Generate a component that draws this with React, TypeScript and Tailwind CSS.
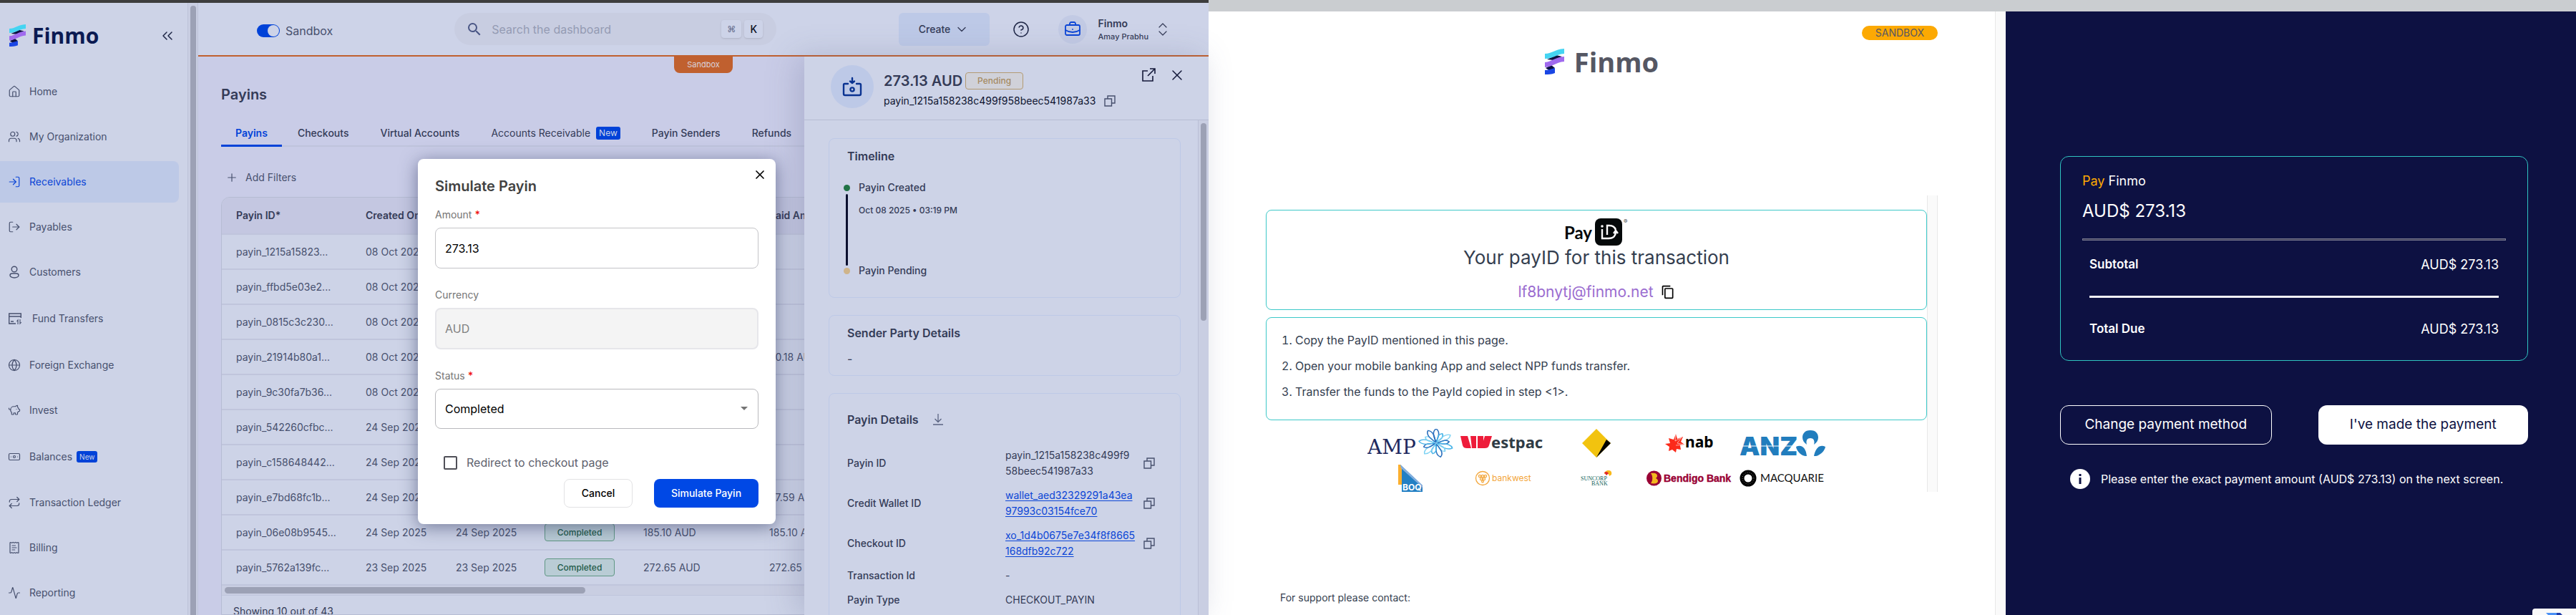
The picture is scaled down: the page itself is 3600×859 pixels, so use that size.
import React from "react";
import {
  Activity,
  Banknote,
  BriefcaseBusiness,
  ChevronDown,
  ChevronsLeft,
  ChevronsUpDown,
  CircleHelp,
  Globe,
  House,
  LogIn,
  LogOut,
  PiggyBank,
  Plus,
  ReceiptText,
  Repeat,
  Users,
  X,
} from "lucide-react";
import { MdContentCopy, MdSearch } from "react-icons/md";

const ui = "font-['Inter','Liberation_Sans',sans-serif]";

function FinmoMark({ className }: { className: string }) {
  return (
    <svg viewBox="0 0 27 36" preserveAspectRatio="none" className={className} aria-hidden="true">
      <path d="M3 15 16 9l8 2-12 5z" fill="#0d1142" />
      <path d="M1 27 9 23l5 4-7 4z" fill="#0d1142" />
      <path d="M0 7C10 7 13 1 27 0v7C15 8 12 14 0 14z" fill="#45d4f2" />
      <path d="M0 19C10 18 14 12 27 11v7C15 19 12 25 0 26z" fill="#a06aee" />
      <path d="M0 30c5 0 9-2 14-3v7c-5 2-9 2-14 2z" fill="#1a46e4" />
    </svg>
  );
}

function CustomerIcon() {
  return (
    <svg viewBox="0 0 18 18" className="size-[18px]" fill="none" stroke="currentColor" strokeWidth="1.4" aria-hidden="true">
      <circle cx="9" cy="5" r="3.8" />
      <path d="M3 13.5C3 11.6 4.600 11 6 11h6c1.400 0 3 .6 3 2.500S12.500 17 9 17s-6-1.600-6-3.500z" />
    </svg>
  );
}

function FundIcon() {
  return (
    <svg viewBox="0 0 20 18" className="h-[18px] w-5" fill="none" stroke="currentColor" strokeWidth="1.4" aria-hidden="true">
      <path d="M18.300 8V2H1.700v14H11M1.700 6h16.600M4 13h4" />
      <path d="M14 17v-6l-1.500 2M17 10v6l1.800-2" strokeWidth="1.100" />
    </svg>
  );
}

// two overlapping squares
function CopyIcon() {
  return (
    <svg viewBox="0 0 16 16" className="size-4" fill="none" stroke="currentColor" strokeWidth="1.400" aria-hidden="true">
      <path d="M1 5h9.500v10H1z" />
      <path d="M5 5V1h10v10h-4.500" />
    </svg>
  );
}

const navItems = [
  { label: "Home", icon: House },
  { label: "My Organization", icon: Users },
  { label: "Receivables", icon: LogIn, active: true },
  { label: "Payables", icon: LogOut },
  { label: "Customers", custom: <CustomerIcon /> },
  { label: "Fund Transfers", custom: <FundIcon />, height: "h-[62px]", gap: "gap-3.5" },
  { label: "Foreign Exchange", icon: Globe },
  { label: "Invest", icon: PiggyBank },
  { label: "Balances", icon: Banknote, badge: true, height: "h-[61px]" },
  { label: "Transaction Ledger", icon: Repeat },
  { label: "Billing", icon: ReceiptText },
  { label: "Reporting", icon: Activity },
];

function Sidebar() {
  return (
    <aside className="flex w-[263px] shrink-0 flex-col border-r border-[#bdc3d9] bg-[#cdd3e7]">
      <div className="flex h-[95px] shrink-0 items-center pr-4 pb-1 pl-[13px]">
        <FinmoMark className="h-[31px] w-[23px]" />
        <span className="ml-[9px] font-['Open_Sans',sans-serif] text-[30px] leading-none font-bold text-[#0b1a52]">Finmo</span>
        <button type="button" aria-label="Collapse menu" className="ml-auto text-[#1f2747]">
          <ChevronsLeft className="size-6" strokeWidth={1.5} />
        </button>
      </div>
      <nav className="flex flex-col gap-[5px] pr-3">
        {navItems.map(({ label, icon: Icon, custom, active, badge, height, gap }) => (
          <a
            key={label}
            href="#"
            className={`flex ${height ?? "h-[58px]"} shrink-0 items-center ${gap ?? "gap-3"} rounded-r-lg pl-[11px] text-sm ${
              active ? "bg-[#bdc9e7] text-[#0b45d6]" : "text-[#47506e]"
            }`}
          >
            {custom ?? (Icon && <Icon className="size-[18px]" strokeWidth={1.6} aria-hidden="true" />)}
            <span>{label}</span>
            {badge && <span className="-ml-1.5 rounded-[3px] bg-[#0042d8] px-1 text-[10px] leading-4 text-[#cdd3e7]">New</span>}
          </a>
        ))}
      </nav>
    </aside>
  );
}

function TopBar() {
  return (
    <header className="flex h-[75px] shrink-0 items-center border-b-2 border-[#c0602f] bg-[#cdd3e8] pl-[82px]">
      <label className="mt-1 flex items-center gap-2 text-base text-[#47506e]">
        <input type="checkbox" role="switch" defaultChecked className="peer sr-only" />
        <span className="flex h-[18px] w-8 items-center justify-end rounded-full bg-[#0042d8] p-px">
          <span className="size-4 rounded-full bg-[#cdd3e8]" />
        </span>
        Sandbox
      </label>
      <div className="ml-[170px] flex h-[45px] w-[450px] items-center rounded-full bg-[#c8cde1] pr-[19px] pl-4">
        <MdSearch className="size-6 text-[#4a5685]" aria-hidden="true" />
        <input
          type="text"
          aria-label="Search the dashboard"
          placeholder="Search the dashboard"
          className="ml-3 min-w-0 flex-1 bg-transparent text-base outline-none placeholder:text-[#949bb3]"
        />
        <kbd className="flex h-[25px] w-7 items-center justify-center rounded bg-[#cdd3e8] font-['DejaVu_Sans',sans-serif] text-xs text-[#5f6888] shadow-sm">⌘</kbd>
        <kbd className="ml-1 flex h-[25px] w-[26px] items-center justify-center rounded bg-[#cdd3e8] font-['Inter',sans-serif] text-sm font-medium text-[#0b0f25] shadow-sm">K</kbd>
      </div>
      <button type="button" className="ml-auto flex h-[46px] w-[127px] items-center justify-center gap-1.5 rounded-md bg-[#bdc9e7] text-sm font-medium text-[#343b57]">
        Create <ChevronDown className="size-5" strokeWidth={1.6} />
      </button>
      <button type="button" aria-label="Help" className="ml-8 text-[#1f2747]">
        <CircleHelp className="size-6" strokeWidth={1.5} />
      </button>
      <button type="button" className="mr-[52px] ml-10 flex items-center text-left text-[#343b57]">
        <span className="flex size-10 items-center justify-center rounded-full bg-[#c2cae4] text-[#0b45d6]">
          <BriefcaseBusiness className="size-6" strokeWidth={1.8} aria-hidden="true" />
        </span>
        <span className="ml-4 flex flex-col">
          <span className="text-sm leading-5 font-semibold">Finmo</span>
          <span className="text-[11px] leading-4 font-medium">Amay Prabhu</span>
        </span>
        <ChevronsUpDown className="ml-2 size-6" strokeWidth={1.2} />
      </button>
    </header>
  );
}

const tabs = ["Payins", "Checkouts", "Virtual Accounts", "Accounts Receivable", "Payin Senders", "Refunds"];

const payins = [
  ["payin_1215a15823...", "08 Oct 2025", "08 Oct 2025", "Pending", "273.13 AUD", ""],
  ["payin_ffbd5e03e2...", "08 Oct 2025", "08 Oct 2025", "Pending", "112.40 AUD", ""],
  ["payin_0815c3c230...", "08 Oct 2025", "08 Oct 2025", "Pending", "64.00 AUD", ""],
  ["payin_21914b80a1...", "08 Oct 2025", "08 Oct 2025", "Completed", "20.18 AUD", "20.18 AUD"],
  ["payin_9c30fa7b36...", "08 Oct 2025", "08 Oct 2025", "Pending", "20.18 AUD", ""],
  ["payin_542260cfbc...", "24 Sep 2025", "24 Sep 2025", "Pending", "95.20 AUD", ""],
  ["payin_c158648442...", "24 Sep 2025", "24 Sep 2025", "Pending", "43.75 AUD", ""],
  ["payin_e7bd68fc1b...", "24 Sep 2025", "24 Sep 2025", "Completed", "27.59 AUD", "27.59 AUD"],
  ["payin_06e08b9545...", "24 Sep 2025", "24 Sep 2025", "Completed", "185.10 AUD", "185.10 AUD"],
  ["payin_5762a139fc...", "23 Sep 2025", "23 Sep 2025", "Completed", "272.65 AUD", "272.65 AUD"],
];

function PayinsPage() {
  return (
    <main className="flex h-full flex-col overflow-hidden pt-[39px] pl-8">
      <h1 className="text-xl leading-7 font-semibold text-[#343b57]">Payins</h1>
      <div role="tablist" className="mt-[23px] flex h-9 shrink-0 items-stretch border-b-2 border-[#bfc4dc] text-sm text-[#343b57]">
        {tabs.map((tab, i) => (
          <button
            key={tab}
            type="button"
            role="tab"
            aria-selected={i === 0}
            className={
              i === 0
                ? "-mb-0.5 border-b-3 border-[#0042d8] px-5 font-semibold text-[#0042d8]"
                : `flex items-center gap-2 px-[22px] ${i === 3 ? "" : "font-medium"}`
            }
          >
            {tab}
            {i === 3 && <span className="rounded-[3px] bg-[#0042d8] px-1 text-xs leading-[18px] text-[#cdd3e7]">New</span>}
          </button>
        ))}
      </div>
      <button type="button" className="mt-[33px] ml-1.5 flex h-5 items-center gap-2.5 self-start text-sm text-[#47506e]">
        <Plus className="size-[18px]" strokeWidth={1.6} /> Add Filters
      </button>
      <div className="mt-[17px] flex-1 overflow-hidden rounded-tl-xl border border-[#b6bcd3] bg-[#cdd3e7]">
        <table className="w-[1300px] table-fixed text-left text-sm text-[#47506e]">
          <colgroup>
            <col className="w-[201px]" />
            <col className="w-[126px]" />
            <col className="w-[124px]" />
            <col className="w-[138px]" />
            <col className="w-[176px]" />
            <col />
          </colgroup>
          <thead className="bg-[#c4c7e1] text-[#343b57]">
            <tr className="h-[51px] border-b-2 border-[#c0c5dc]">
              <th className="pl-5 font-semibold">Payin ID*</th>
              <th className="font-semibold">Created On</th>
              <th className="font-semibold">Updated On</th>
              <th className="font-semibold">Status</th>
              <th className="font-semibold">Amount</th>
              <th className="font-semibold">Paid Amount</th>
            </tr>
          </thead>
          <tbody>
            {payins.map(([id, created, updated, status, amount, paid]) => (
              <tr key={id} className="h-[49px] border-b-2 border-[#c0c5dc]">
                <td className="pl-5">{id}</td>
                <td>{created}</td>
                <td>{updated}</td>
                <td>
                  <span className="flex h-[25px] w-[98px] items-center justify-center rounded border border-[#5f9784] bg-[#b9ccd5] text-xs font-medium text-[#1d5a48]">
                    {status}
                  </span>
                </td>
                <td>{amount}</td>
                <td>{paid}</td>
              </tr>
            ))}
          </tbody>
        </table>
        <div className="flex h-3.5 items-center border-b border-[#c0c5dc] bg-[#c9cee2] pl-1">
          <div className="h-[9px] w-[504px] rounded-full bg-[#9ca1b5]" />
        </div>
        <p className="pt-2.5 pl-4 text-sm leading-6 text-[#343b57]">Showing 10 out of 43</p>
      </div>
    </main>
  );
}

function Card({ className, children }: { className: string; children: React.ReactNode }) {
  return <section className={`rounded-lg border border-[#bdc9e7] pl-[25px] text-[#343b57] ${className}`}>{children}</section>;
}

const details = [
  { label: "Payin ID", lines: ["payin_1215a158238c499f9", "58beec541987a33"], link: false },
  { label: "Credit Wallet ID", lines: ["wallet_aed32329291a43ea", "97993c03154fce70"], link: true },
  { label: "Checkout ID", lines: ["xo_1d4b0675e7e34f8f8665", "168dfb92c722"], link: true },
];

function Drawer() {
  return (
    <aside className="absolute inset-y-0 right-0 flex w-[565px] flex-col bg-[#cdd3e7] shadow-[-10px_0_40px_rgba(90,100,140,0.25)]">
      <div className="flex h-[89px] shrink-0 border-b border-[#b6bcd3] pt-3 pl-[37px]">
        <span className="flex size-[60px] items-center justify-center rounded-full bg-[#bdc9e7] text-[#0a3391]">
          <svg viewBox="0 0 28 28" className="size-7" fill="none" stroke="currentColor" strokeWidth="2.400" strokeLinecap="round" strokeLinejoin="round" aria-hidden="true">
            <path d="M8 10H3.500C2.500 10 2 10.500 2 11.500V24c0 1.500.5 2 2 2h20c1.500 0 2-.5 2-2V11.500c0-1-.5-1.500-1.500-1.500H20M14 2v7M11 6.500 14 9l3-2.500" />
            <circle cx="14" cy="18" r="2.600" />
          </svg>
        </span>
        <div className="ml-3.5 flex flex-col pt-2">
          <div className="flex h-7 items-center gap-1 text-xl font-semibold text-[#343b57]">
            273.13 AUD
            <span className="flex h-6 items-center rounded border border-[#b39a73] bg-[#d0d1d9] px-4 text-xs font-medium text-[#a58a62]">Pending</span>
          </div>
          <div className="flex h-7 items-center gap-3 text-sm text-[#0e1330]">
            payin_1215a158238c499f958beec541987a33
            <button type="button" aria-label="Copy payin id" className="text-[#47506e]">
              <CopyIcon />
            </button>
          </div>
        </div>
        <div className="mr-8 ml-auto flex h-6 items-center gap-[18px] pt-1 text-[#14193a]">
          <button type="button" aria-label="Open in new tab">
            <svg viewBox="0 0 20 20" className="size-5" fill="none" stroke="currentColor" strokeWidth="1.600" aria-hidden="true">
              <path d="M9 4H2v14h14v-7M12 1h7v7M19 1 9 11" />
            </svg>
          </button>
          <button type="button" aria-label="Close details">
            <X className="size-6" strokeWidth={1.5} />
          </button>
        </div>
      </div>
      <div className="flex min-h-0 flex-1">
        <div className="flex min-w-0 flex-1 flex-col gap-6 overflow-hidden pt-[25px] pr-6 pl-[34px]">
          <Card className="h-[223px] shrink-0 pt-3">
            <h2 className="text-base leading-6 font-semibold">Timeline</h2>
            <ol className="mt-5 -ml-[5px] flex text-sm">
              <li className="flex w-[9px] flex-col items-center pt-2" aria-hidden="true">
                <span className="size-[9px] rounded-full bg-[#217346]" />
                <span className="mt-1 h-[100px] w-[3px] rounded-full bg-[#0b1030]" />
                <span className="mt-[3px] size-[9px] rounded-full bg-[#cfb48a]" />
              </li>
              <li className="ml-3">
                <p className="leading-6 font-medium">Payin Created</p>
                <p className="mt-2 text-xs leading-6 font-medium">Oct 08 2025 • 03:19 PM</p>
                <p className="mt-[60px] leading-6 font-medium">Payin Pending</p>
              </li>
            </ol>
          </Card>
          <Card className="h-[85px] shrink-0 pt-3">
            <h2 className="text-base leading-6 font-semibold">Sender Party Details</h2>
            <p className="mt-3 leading-6">-</p>
          </Card>
          <Card className="h-[400px] shrink-0 pt-6">
            <div className="flex items-center gap-5">
              <h2 className="text-base leading-6 font-semibold">Payin Details</h2>
              <button type="button" aria-label="Download details" className="text-[#5b6482]">
                <svg viewBox="0 0 14 16" className="h-4 w-3.5" fill="none" stroke="currentColor" strokeWidth="1.300" aria-hidden="true">
                  <path d="M7 0v11M2.500 7 7 11.500 11.500 7M0 15h14" />
                </svg>
              </button>
            </div>
            <dl className="mt-[27px] grid grid-cols-[221px_1fr] items-center gap-y-3 text-sm leading-[22px]">
              {details.map(({ label, lines, link }) => (
                <React.Fragment key={label}>
                  <dt className="font-medium">{label}</dt>
                  <dd className="flex items-center">
                    <span className="w-[193px]">
                      {lines.map((line) =>
                        link ? (
                          <a key={line} href="#" className="block text-[#0b45d6] underline underline-offset-2">
                            {line}
                          </a>
                        ) : (
                          <span key={line} className="block">
                            {line}
                          </span>
                        ),
                      )}
                    </span>
                    <button type="button" aria-label={`Copy ${label}`} className="text-[#47506e]">
                      <CopyIcon />
                    </button>
                  </dd>
                </React.Fragment>
              ))}
              <dt className="font-medium">Transaction Id</dt>
              <dd>-</dd>
              <dt className="font-medium">Payin Type</dt>
              <dd>CHECKOUT_PAYIN</dd>
            </dl>
          </Card>
        </div>
        <div className="flex w-[15px] justify-center border-l border-[#b9bfd6] bg-[#c9cee2] pt-1">
          <div className="h-[276px] w-2 rounded-full bg-[#9ca1b5]" />
        </div>
      </div>
    </aside>
  );
}

function SimulateDialog() {
  return (
    <div className="absolute inset-0 flex items-center justify-center pt-[91px] pr-[21px]">
      <form
        role="dialog"
        aria-label="Simulate Payin"
        className="flex w-[500px] flex-col rounded-lg bg-white px-6 pt-3 pb-[23px] shadow-[0_4px_24px_rgba(40,50,90,0.55)]"
      >
        <button type="button" aria-label="Close" className="-mr-3 self-end text-black">
          <X className="size-5" strokeWidth={2} />
        </button>
        <h2 className="-mt-2 text-xl leading-7 font-semibold text-[#424242]">Simulate Payin</h2>
        <label htmlFor="amount" className="mt-3.5 text-sm leading-6 text-[#757575]">
          Amount <span className="font-semibold text-[#f01414]">*</span>
        </label>
        <input id="amount" defaultValue="273.13" className="mt-1.5 h-[57px] rounded-lg border border-[#c4c4c8] px-[13px] text-base text-black" />
        <label htmlFor="currency" className="mt-[25px] text-sm leading-6 text-[#757575]">
          Currency
        </label>
        <input id="currency" disabled value="AUD" className="mt-1.5 h-[58px] rounded-lg border-2 border-[#e6e6ea] bg-[#f4f4f4] px-3 text-base text-[#808080]" />
        <label htmlFor="status" className="mt-[25px] text-sm leading-6 text-[#757575]">
          Status <span className="font-semibold text-[#f01414]">*</span>
        </label>
        <div className="relative mt-1.5 flex">
          <select id="status" className="h-[56px] w-full appearance-none rounded-lg border border-[#b9b9bd] bg-white px-[13px] text-base text-black">
            <option>Completed</option>
          </select>
          <svg viewBox="0 0 10 5" className="pointer-events-none absolute top-[25px] right-[15px] h-[5px] w-2.5" aria-hidden="true">
            <path d="M0 0h10L5 5z" fill="#757575" />
          </svg>
        </div>
        <label className="mt-[35px] flex items-center gap-[13px] pl-3 text-base leading-6 text-[#60626e]">
          <input type="checkbox" className="size-[19px] appearance-none rounded-xs border-2 border-[#505058]" />
          Redirect to checkout page
        </label>
        <div className="mt-[11px] flex justify-end gap-[30px] text-sm font-medium">
          <button type="button" className="h-10 w-24 rounded-lg border border-[#e2e2e4] text-black">
            Cancel
          </button>
          <button type="submit" className="h-10 w-[146px] rounded-lg bg-[#0048e5] text-white">
            Simulate Payin
          </button>
        </div>
      </form>
    </div>
  );
}

function AmpLogo() {
  const petals = [0, 28, 55, 82, 110, 138, 165, 195, 222, 250, 278, 305, 332];
  return (
    <svg viewBox="0 0 120 40" className="h-10 w-[120px]" role="img" aria-label="AMP">
      <text x="0" y="35" fontFamily="DejaVu Serif, serif" fontSize="28" fill="#1f2a5e">AMP</text>
      <g transform="translate(96 20) scale(1.15 .95)" fill="none" strokeWidth="1.400">
        {petals.map((deg, i) => (
          <path
            key={deg}
            d={i % 2 ? "M0-2C-3-9-4-13 0-16 4-13 3-9 0-2z" : "M0-2C-4-11-4-18 0-21 4-18 4-11 0-2z"}
            stroke={i % 3 === 0 ? "#2a6fbd" : i % 3 === 1 ? "#49b4e8" : "#7fd3f3"}
            transform={`rotate(${deg})`}
          />
        ))}
      </g>
    </svg>
  );
}

function BankLogos() {
  return (
    <div className="mt-3 grid grid-cols-[repeat(5,120px)] place-items-center justify-center gap-2.5">
      <AmpLogo />
      <svg viewBox="0 0 120 40" className="h-10 w-[120px]" role="img" aria-label="Westpac">
        <path d="M0 10h10l5 17H9c-3 0-5-1-6-4zM14 10h8v17h-6zM24 10h8v17h-8zM34 10h10l-4 13c-1 3-3 4-6 4h-5z" fill="#ee1c3a" />
        <text x="43" y="27" fontFamily="Noto Sans, sans-serif" fontWeight="700" fontSize="22" fill="#2f3b45">estpac</text>
      </svg>
      <svg viewBox="0 0 40 40" className="size-10" role="img" aria-label="Commonwealth Bank">
        <path d="M20 0 40 20 20 40 0 20z" fill="#f2c30f" />
        <path d="M40 20 20 40l14-25z" fill="#000" />
      </svg>
      <svg viewBox="0 0 68 26" className="h-[26px] w-[68px]" role="img" aria-label="nab">
        <path d="m15 0 2 7 8-3-3 7 5 4-6 1 1 6-6-1-1 5-5-4-5 2 1-6-6-4 7-1-2-7 7 2z" fill="#fb2a1a" />
        <path d="m15 0-1 10 9-5-6 8 9 2-11 1" fill="none" stroke="#fff" strokeWidth=".6" />
        <text x="28" y="19" fontFamily="Noto Sans, sans-serif" fontWeight="700" fontSize="21" fill="#000">nab</text>
      </svg>
      <svg viewBox="0 0 120 40" className="h-10 w-[120px]" role="img" aria-label="ANZ">
        <text x="0" y="37" fontFamily="Inter, sans-serif" fontWeight="900" fontSize="36" fill="#217dbd">ANZ</text>
        <path d="M0 24h78" stroke="#fff" strokeWidth="1.200" />
        <path d="M99 2c8 0 11 5 11 10 0 4-2 7-6 10 1-3 1-9-5-9s-6 6-5 9c-4-3-6-6-6-10 0-5 3-10 11-10zM79 25c8-4 14 2 15 13-6 1-14-6-15-13zM120 25c-8-4-14 2-16 13 6 1 15-6 16-13z" fill="#217dbd" />
      </svg>
      <svg viewBox="0 0 34 38" className="h-[38px] w-[34px]" role="img" aria-label="BOQ">
        <path d="M0 0h3l3 4v24H0z" fill="#fbaf2f" />
        <path d="m3 0 31 29v9H5V5z" fill="#2380c4" />
        <path d="m3 0 31 29v3L4 5z" fill="#84aede" />
        <text x="6" y="36" fontFamily="Inter, sans-serif" fontWeight="700" fontSize="12" fill="#fff">BOQ</text>
      </svg>
      <svg viewBox="0 0 80 22" className="h-[22px] w-20" role="img" aria-label="bankwest">
        <circle cx="11" cy="11" r="9.500" fill="none" stroke="#f3a63b" strokeWidth="1.300" />
        <g fill="none" stroke="#f3a63b" strokeWidth="1.200">
          <circle cx="7" cy="8" r="1.600" />
          <circle cx="11" cy="8" r="1.600" />
          <circle cx="15" cy="8" r="1.600" />
          <circle cx="9" cy="12" r="1.600" />
          <circle cx="13" cy="12" r="1.600" />
          <circle cx="11" cy="15.500" r="1.400" />
        </g>
        <text x="24" y="15" fontFamily="Inter, sans-serif" fontSize="12" fill="#f3a63b">bankwest</text>
      </svg>
      <svg viewBox="0 0 44 22" className="h-[22px] w-11" role="img" aria-label="Suncorp Bank">
        <path d="M33 5c0-3 3-5 6-5s5 2 4 6l-3 2c0-3-2-4-7-3z" fill="#f9b91a" />
        <path d="M33 3c2-2 5-1 6 1l-3 3z" fill="#e0262d" />
        <text x="0" y="14" fontFamily="Liberation Serif, serif" fontSize="8" fill="#0f5f59">SUNCORP</text>
        <text x="15" y="21" fontFamily="Liberation Serif, serif" fontSize="8" fill="#0f5f59">BANK</text>
      </svg>
      <svg viewBox="0 0 120 24" className="h-6 w-[120px]" role="img" aria-label="Bendigo Bank">
        <circle cx="10.500" cy="12" r="10.500" fill="#990134" />
        <path d="M6 5c7-1 9 1 9 4 0 1-1 2-2 3 2 1 3 2 3 4 0 3-4 4-10 3 3-4 3-10 0-14z" fill="#f2b81f" />
        <text x="24" y="17" fontFamily="Liberation Sans, sans-serif" fontWeight="700" fontSize="14" stroke="#990134" strokeWidth=".4" fill="#990134">Bendigo Bank</text>
      </svg>
      <svg viewBox="0 0 120 24" className="h-6 w-[120px]" role="img" aria-label="Macquarie">
        <circle cx="12" cy="12" r="8.500" fill="none" stroke="#000" strokeWidth="6" />
        <circle cx="12" cy="12" r="8" fill="none" stroke="#fff" strokeWidth=".5" strokeDasharray="1 2" />
        <text x="29" y="17" fontFamily="Lato, sans-serif" fontSize="15" fill="#111">MACQUARIE</text>
      </svg>
    </div>
  );
}

function PaymentPage() {
  return (
    <section className="flex min-w-0 bg-white">
      <div className="flex min-w-0 flex-1 flex-col px-20">
        <span className="mt-5 self-end rounded-full bg-[#fca903] px-[19px] text-sm leading-5 text-[#555763]">SANDBOX</span>
        <div className="mt-3 flex h-9 items-center justify-center">
          <FinmoMark className="h-9 w-[27px]" />
          <span className="ml-3.5 font-['Open_Sans',sans-serif] text-[38px] leading-none font-bold text-[#555763]">Finmo</span>
        </div>
        <div className="mt-[169px] flex">
          <div className="flex min-w-0 flex-1 flex-col pt-5 text-[#343e4f]">
            <div className="flex h-[140px] flex-col items-center rounded-lg border border-[#3cc8c8] pt-2.5">
              <svg viewBox="0 0 90 40" className="h-10 w-[90px] shrink-0" role="img" aria-label="PayID">
                <text x="0" y="30" fontFamily="Lato, sans-serif" fontWeight="700" fontSize="24" fill="#05090a">Pay</text>
                <rect x="43" y="1" width="38" height="38" rx="8" fill="#05090a" />
                <path d="M53 16v13h9c7 0 10-4 10-9M60 24V11h3c5 0 8 3 9 6M69 22l3-4 3 4" fill="none" stroke="#fff" strokeWidth="2.400" />
                <circle cx="53" cy="12" r="1.800" fill="#fff" />
                <text x="83" y="8" fontFamily="Inter, sans-serif" fontSize="8" fill="#333">®</text>
              </svg>
              <h2 className="text-[26px] leading-8">Your payID for this transaction</h2>
              <div className="mt-4 flex items-center gap-2.5 text-[21px] leading-8 text-[#9b6dd0]">
                lf8bnytj@finmo.net
                <button type="button" aria-label="Copy PayID" className="text-black">
                  <MdContentCopy className="size-5" />
                </button>
              </div>
            </div>
            <ol className="mt-2.5 flex h-[144px] list-decimal flex-col justify-center gap-3 rounded-lg border border-[#3cc8c8] pb-2 pl-10 text-base leading-6">
              <li>Copy the PayID mentioned in this page.</li>
              <li>Open your mobile banking App and select NPP funds transfer.</li>
              <li>Transfer the funds to the PayId copied in step &lt;1&gt;.</li>
            </ol>
            <BankLogos />
          </div>
          <div className="w-[15px] border-x border-[#e8e8e8] bg-[#fafafa]" />
        </div>
        <p className="mt-auto mb-3 pl-5 text-sm leading-6 text-[#343e4f]">For support please contact:</p>
      </div>
      <div className="w-[15px] border-l border-[#e8e8e8] bg-[#fafafa]" />
    </section>
  );
}

function SummaryPage() {
  return (
    <section className="relative flex min-w-0 flex-col overflow-hidden bg-[#0d1142] pt-[202px] pr-[67px] pl-[76px] text-white">
      <div className="h-[286px] rounded-xl border border-[#2fc4c0] px-[30px] pt-[22px]">
        <p className="text-lg leading-6">
          <span className="text-[#fca903]">Pay</span> Finmo
        </p>
        <p className="mt-3 text-2xl leading-9">AUD$ 273.13</p>
        <hr className="mt-5 h-[3px] border border-[#7a7a90] bg-[#3a3a55]" />
        <dl className="px-2.5">
          <div className="flex h-20 items-center justify-between border-b-3 border-[#f2f2f7] pb-2.5">
            <dt className="text-[17px] font-semibold">Subtotal</dt>
            <dd className="text-lg">AUD$ 273.13</dd>
          </div>
          <div className="flex h-[88px] items-center justify-between">
            <dt className="text-[17px] font-semibold">Total Due</dt>
            <dd className="text-lg">AUD$ 273.13</dd>
          </div>
        </dl>
      </div>
      <div className="mt-[62px] flex gap-[65px] text-[19px]">
        <button type="button" className="h-[55px] flex-1 rounded-xl border border-white">
          Change payment method
        </button>
        <button type="button" className="h-[55px] flex-1 rounded-xl bg-white text-[#0d1142]">
          I&apos;ve made the payment
        </button>
      </div>
      <p className="mt-[34px] flex items-center gap-[15px] pl-3.5 text-base">
        <svg viewBox="0 0 28 28" className="size-7 shrink-0" aria-hidden="true">
          <circle cx="14" cy="14" r="14" fill="#fff" />
          <path d="M12.500 7h3v3h-3zM12.500 12h3v9h-3z" fill="#0d1142" />
        </svg>
        Please enter the exact payment amount (AUD$ 273.13) on the next screen.
      </p>
      {/* reCAPTCHA badge in the corner */}
      <div className="absolute right-0 bottom-0 flex h-[9px] w-[61px] items-end justify-center rounded-tl-sm bg-[#f9f9f9]">
        <svg viewBox="0 0 24 3" className="h-[3px] w-6" aria-hidden="true">
          <path d="M0 0h15v3H3z" fill="#4a90f5" />
          <path d="M15 0h5l3 3h-8z" fill="#1c3aa9" />
        </svg>
      </div>
    </section>
  );
}

export default function App() {
  return (
    <div className={`grid h-screen grid-cols-[1689fr_1911fr] grid-rows-[minmax(0,1fr)] overflow-hidden ${ui}`}>
      <div className="relative flex min-w-0 border-t-4 border-[#3d3d3d] bg-[#c9cce7]">
        <Sidebar />
        <div className="flex w-3.5 shrink-0 justify-center border-r border-[#bdc3d9] bg-[#c9cee2] pt-1">
          <div className="h-full w-2 rounded-t-full bg-[#9ca1b5]" />
        </div>
        <div className="flex min-w-0 flex-1 flex-col">
          <TopBar />
          <div className="relative min-h-0 flex-1">
            <PayinsPage />
            <span className="absolute inset-x-0 top-0 mx-auto flex h-[23px] w-[82px] items-center justify-center rounded-b-lg bg-[#c0602f] text-[11px] text-[#d9d3dd]">
              Sandbox
            </span>
            <Drawer />
          </div>
        </div>
        <SimulateDialog />
      </div>
      <div className="grid min-w-0 grid-cols-[1114fr_797fr] grid-rows-[minmax(0,1fr)] border-t-16 border-[#cacdd0]">
        <PaymentPage />
        <SummaryPage />
      </div>
    </div>
  );
}
